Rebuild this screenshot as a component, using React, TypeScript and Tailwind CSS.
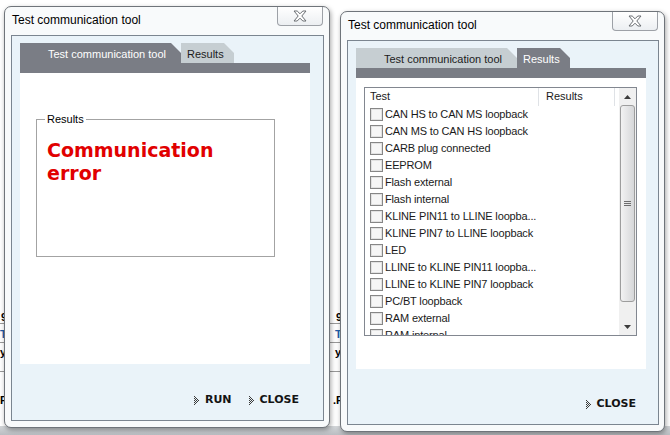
import React from "react";

const SANS = "font-['Liberation_Sans',Arial,sans-serif]";
const BOLD = "font-['DejaVu_Sans',Verdana,sans-serif] font-bold";

const items = [
  "CAN HS to CAN MS loopback",
  "CAN MS to CAN HS loopback",
  "CARB plug connected",
  "EEPROM",
  "Flash external",
  "Flash internal",
  "KLINE PIN11 to LLINE loopba...",
  "KLINE PIN7 to LLINE loopback",
  "LED",
  "LLINE to KLINE PIN11 loopba...",
  "LLINE to KLINE PIN7 loopback",
  "PC/BT loopback",
  "RAM external",
  "RAM internal",
];

function CloseX() {
  return (
    <svg width="14" height="12" viewBox="0 0 14 12">
      <path
        d="M1 1 H4.2 L7 3.8 L9.8 1 H13 L8.8 6 L13 11 H9.8 L7 8.2 L4.2 11 H1 L5.2 6 Z"
        fill="#ffffff"
        stroke="#6a6e73"
        strokeWidth="1"
        strokeLinejoin="round"
      />
    </svg>
  );
}

function Dots() {
  const dots = [
    [0, 0], [0, 2], [0, 4], [0, 6], [0, 8],
    [1, 1], [1, 3], [1, 5], [1, 7],
    [2, 2], [2, 4], [2, 6],
    [3, 3], [3, 5],
    [4, 4],
  ];
  return (
    <svg width="5" height="9" viewBox="0 0 5 9">
      {dots.map(([x, y], i) => (
        <rect key={i} x={x} y={y} width="1" height="1" fill="#3a3a3a" />
      ))}
    </svg>
  );
}

function Btn({ label }: { label: string }) {
  return (
    <div className="flex items-center gap-[6px]">
      <Dots />
      <span className={`${BOLD} text-[11px] leading-[14px] text-[#141414]`}>{label}</span>
    </div>
  );
}

function Window({ pos, children }: { pos: string; children: React.ReactNode }) {
  return (
    <div
      className={`absolute ${pos} flex flex-col rounded-[7px] border border-[#6f747a] bg-[#f8fafb] shadow-[1px_2px_5px_rgba(0,0,0,0.35)]`}
    >
      <div className="relative h-[28px] shrink-0 pl-[7px] pt-[6px]">
        <div className={`${SANS} text-[12px] leading-[15px] text-black`}>Test communication tool</div>
        <div className="absolute right-[6px] top-0 flex h-[19px] w-[46px] items-center justify-center rounded-b-[4px] border border-t-0 border-[#9da1a7] bg-gradient-to-b from-white to-[#eceff2]">
          <CloseX />
        </div>
      </div>
      <div className="mb-[6px] ml-[6px] mr-[5px] flex flex-1 flex-col border border-[#7b8590] bg-[#eaf3f9] pl-[8px] pt-[7px]">
        {children}
      </div>
    </div>
  );
}

const CLIP = "[clip-path:polygon(0_0,calc(100%_-_10px)_0,100%_10px,100%_100%,0_100%)]";

function Tabs({ first }: { first: boolean }) {
  return (
    <div className="flex w-[290px] flex-col">
      <div className="flex h-[20px]">
        <div
          className={`${CLIP} ${SANS} flex h-[20px] w-[161px] items-center pl-[28px] pt-[2px] text-[11px] ${
            first ? "bg-[#7a7d85] text-white" : "bg-[#c6ced2] text-[#1c1c1c]"
          }`}
        >
          Test communication tool
        </div>
        <div
          className={`${CLIP} ${SANS} flex h-[20px] w-[53px] items-center pl-[6px] pt-[2px] text-[11px] ${
            first ? "bg-[#c6ced2] text-[#1c1c1c]" : "bg-[#7a7d85] text-white"
          }`}
        >
          Results
        </div>
      </div>
      <div className="h-[10px] bg-[#7a7d85]" />
    </div>
  );
}

function Check() {
  return (
    <div className="h-[13px] w-[13px] shrink-0 border border-[#868686] bg-[#f6f6f6] shadow-[inset_0_0_0_1px_#e2e2e2]" />
  );
}

function ScrollBar() {
  return (
    <div className="flex h-full w-[17px] shrink-0 flex-col bg-[#f0f0f0]">
      <div className="flex h-[17px] items-center justify-center">
        <svg width="7" height="4" viewBox="0 0 7 4">
          <path d="M0 4 L3.5 0 L7 4 Z" fill="#3c3c3c" />
        </svg>
      </div>
      <div className="mx-[1px] flex h-[197px] items-center justify-center rounded-[3px] border border-[#9d9d9d] bg-gradient-to-r from-[#f2f2f2] to-[#d6d7d9]">
        <div className="flex flex-col gap-[1px]">
          <div className="h-px w-[7px] bg-[#6d6d6d]" />
          <div className="h-px w-[7px] bg-[#6d6d6d]" />
          <div className="h-px w-[7px] bg-[#6d6d6d]" />
        </div>
      </div>
      <div className="flex-1" />
      <div className="flex h-[17px] items-center justify-center">
        <svg width="7" height="4" viewBox="0 0 7 4">
          <path d="M0 0 L7 0 L3.5 4 Z" fill="#3c3c3c" />
        </svg>
      </div>
    </div>
  );
}

export default function App() {
  return (
    <div className="relative h-[435px] w-[670px] overflow-hidden bg-white">
      {/* background application fragments */}
      <div className="absolute left-0 top-[426px] h-[9px] w-[670px] bg-gradient-to-b from-[#d3d6d9] to-[#b9bdc1]" />
      <span className={`${SANS} absolute left-[1px] top-[311px] text-[11px] font-bold leading-[12px] text-black`}>9</span>
      <span className={`${SANS} absolute left-[0px] top-[328px] text-[11px] font-bold leading-[12px] text-[#1f5fa8]`}>T</span>
      <span className={`${SANS} absolute left-[0px] top-[346px] text-[11px] font-bold leading-[12px] text-black`}>y</span>
      <span className={`${SANS} absolute left-[0px] top-[394px] text-[11px] font-bold leading-[12px] text-black`}>F</span>
      <div className="absolute left-0 top-[323px] h-px w-[8px] bg-[#9a9a9a]" />
      <div className="absolute left-0 top-[342px] h-px w-[8px] bg-[#9a9a9a]" />
      <div className="absolute left-0 top-[371px] h-px w-[8px] bg-[#9a9a9a]" />
      <span className={`${SANS} absolute left-[336px] top-[311px] text-[11px] font-bold leading-[12px] text-black`}>9</span>
      <span className={`${SANS} absolute left-[335px] top-[328px] text-[11px] font-bold leading-[12px] text-[#1f5fa8]`}>T</span>
      <span className={`${SANS} absolute left-[335px] top-[346px] text-[11px] font-bold leading-[12px] text-black`}>y</span>
      <span className={`${SANS} absolute left-[333px] top-[394px] text-[11px] font-bold leading-[12px] text-black`}>.F</span>
      <div className="absolute left-[330px] top-[323px] h-px w-[12px] bg-[#9a9a9a]" />
      <div className="absolute left-[330px] top-[342px] h-px w-[12px] bg-[#9a9a9a]" />
      <div className="absolute left-[330px] top-[371px] h-px w-[12px] bg-[#9a9a9a]" />

      {/* Left window */}
      <Window pos="left-[4px] top-[6px] w-[326px] h-[422px]">
        <Tabs first />
        <div className="h-[291px] w-[290px] bg-white pl-[16px] pt-[46px]">
          <div className="relative h-[138px] w-[239px] border border-[#a3a3a3] pl-[10px] pt-[19px]">
            <span className={`${SANS} absolute left-[8px] top-[-8px] bg-white px-[2px] text-[11px] leading-[14px] text-black`}>
              Results
            </span>
            <div className={`${BOLD} w-[190px] text-[19px] leading-[23px] text-[#e10000]`}>Communication error</div>
          </div>
        </div>
        <div className="flex w-[290px] justify-end gap-[17px] pr-[11px] pt-[29px]">
          <Btn label="RUN" />
          <Btn label="CLOSE" />
        </div>
      </Window>

      {/* Right window */}
      <Window pos="left-[340px] top-[11px] w-[325px] h-[421px]">
        <Tabs first={false} />
        <div className="h-[291px] w-[290px] bg-white pl-[8px] pt-[9px]">
          <div className="flex h-[249px] w-[273px] overflow-hidden border border-[#828790] bg-white">
            <div className="flex w-[254px] flex-col overflow-hidden">
              <div className={`${SANS} flex h-[18px] shrink-0 text-[11px] leading-[17px] text-[#1a1a1a]`}>
                <div className="w-[174px] border-r border-[#dfe2e6] pl-[5px]">Test</div>
                <div className="w-[76px] border-r border-[#dfe2e6] pl-[7px]">Results</div>
              </div>
              {items.map((t) => (
                <div key={t} className="flex h-[17px] shrink-0 items-center gap-[2px] pl-[5px]">
                  <Check />
                  <span className={`${SANS} whitespace-nowrap text-[11px] leading-[17px] tracking-[-0.15px] text-[#1a1a1a]`}>{t}</span>
                </div>
              ))}
            </div>
            <ScrollBar />
          </div>
        </div>
        <div className="flex w-[290px] justify-end pr-[10px] pt-[28px]">
          <Btn label="CLOSE" />
        </div>
      </Window>
    </div>
  );
}
